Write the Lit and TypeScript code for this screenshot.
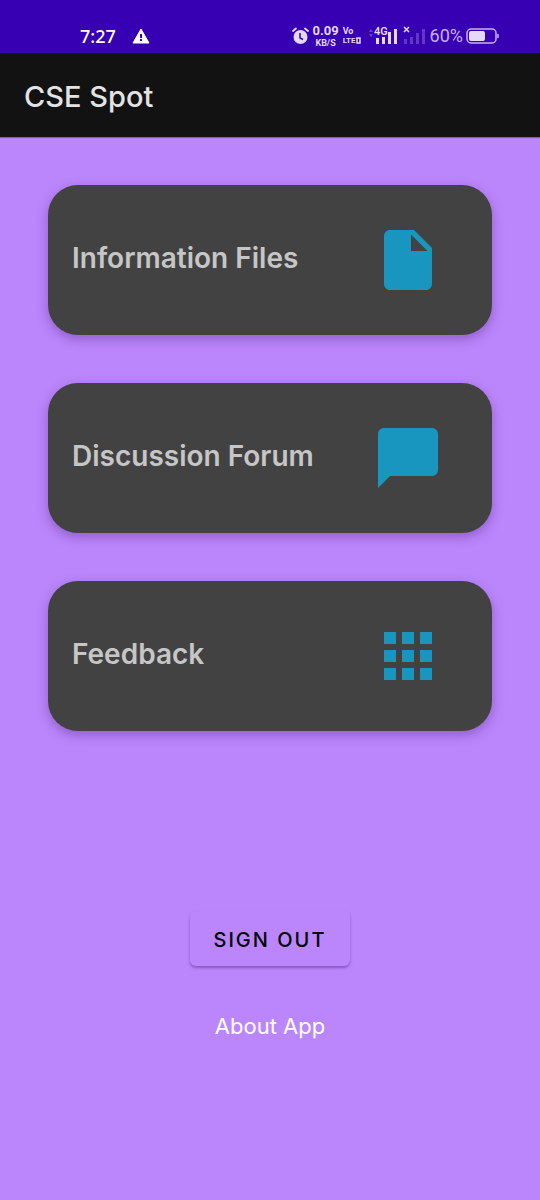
import { LitElement, html, css, svg } from "lit";
import { customElement } from "lit/decorators.js";

const cards = [
  {
    title: "Information Files",
    icon: svg`<path d="M6 2C4.900 2 4 2.900 4 4v16c0 1.100.9 2 2 2h12c1.100 0 2-.9 2-2V8l-6-6H6zm7 7V3.500L18.500 9H13z"/>`,
  },
  {
    title: "Discussion Forum",
    icon: svg`<path d="M20 2H4c-1.100 0-2 .9-2 2v18l4-4h14c1.100 0 2-.9 2-2V4c0-1.100-.9-2-2-2z"/>`,
  },
  {
    title: "Feedback",
    icon: svg`<path d="M4 8h4V4H4v4zm6 12h4v-4h-4v4zm-6 0h4v-4H4v4zm0-6h4v-4H4v4zm6 0h4v-4h-4v4zm6-10v4h4V4h-4zm-6 4h4V4h-4v4zm6 6h4v-4h-4v4zm0 6h4v-4h-4v4z"/>`,
  },
];

@customElement("app-root")
export class AppRoot extends LitElement {
  static styles = css`
    :host {
      display: flex;
      flex-direction: column;
      min-height: 100vh;
      background: #bb86fc;
      font-family: Inter, Roboto, sans-serif;
    }
    .status {
      display: flex;
      align-items: center;
      justify-content: space-between;
      box-sizing: border-box;
      height: 53px;
      padding: 18px 41px 0 80px;
      background: #3700b3;
      color: #e4d9f8;
    }
    .group {
      display: flex;
      align-items: center;
    }
    .left {
      gap: 16px;
      color: #fff;
    }
    .right {
      gap: 4px;
    }
    .time {
      font: 500 18px/24px "Noto Sans", sans-serif;
    }
    .stack {
      display: flex;
      flex-direction: column;
      align-items: center;
      font: 700 9px/10px Roboto, sans-serif;
    }
    .rate {
      font-size: 13px;
      line-height: 14px;
    }
    .volte {
      align-items: flex-start;
      padding-right: 3px;
    }
    .lte {
      display: flex;
      align-items: center;
      font-size: 8px;
    }
    .percent {
      font: 400 18px/24px Roboto, sans-serif;
      color: #c9b3ee;
    }
    .charge {
      display: flex;
      align-items: center;
      gap: 3px;
    }
    svg {
      display: block;
      flex: none;
    }
    .bar {
      display: flex;
      align-items: center;
      height: 84px;
      padding: 0 24px;
      background: #121212;
      box-shadow: 0 1px 1px rgba(0, 0, 0, 0.3);
    }
    .title {
      margin: 0;
      padding-top: 4px;
      font: 500 29px/40px Inter, sans-serif;
      color: #e3e3e3;
    }
    .content {
      display: flex;
      flex-direction: column;
      gap: 48px;
      padding: 48px;
    }
    .card {
      display: flex;
      align-items: center;
      justify-content: space-between;
      height: 150px;
      padding: 0 48px 0 24px;
      border: 0;
      border-radius: 30px;
      background: #424242;
      color: #c6c6c6;
      font: 600 28px/40px Inter, sans-serif;
      text-align: left;
      box-shadow: 0 4px 12px rgba(60, 20, 110, 0.35);
      cursor: pointer;
    }
    .label {
      padding-bottom: 4px;
    }
    .icon {
      fill: #1896bf;
    }
    .footer {
      display: flex;
      flex-direction: column;
      align-items: center;
      gap: 44px;
      padding: 132px 48px 48px;
    }
    .signout {
      height: 55px;
      padding: 2px 24px 0;
      border: 0;
      border-radius: 6px;
      background: #bb86fc;
      color: #000;
      font: 500 20px/28px Inter, sans-serif;
      letter-spacing: 2px;
      box-shadow: 0 2px 3px rgba(60, 20, 110, 0.4);
      cursor: pointer;
    }
    .about {
      color: #fff;
      font: 400 22px/32px Inter, sans-serif;
      text-decoration: none;
    }
  `;

  render() {
    return html`
      <header>
        <div class="status">
          <div class="group left">
            <span class="time">7:27</span>
            <svg width="18" height="16" viewBox="0 0 18 16">
              <path d="M9 1 17 15H1z" fill="#fff" stroke="#fff" stroke-linejoin="round" />
              <path d="M9 6v4M9 11v2" stroke="#3700b3" stroke-width="2" />
            </svg>
          </div>
          <div class="group right">
            <svg width="17" height="18" viewBox="0 0 17 18">
              <circle cx="8.500" cy="10" r="7" fill="currentColor" />
              <path d="M1 4 4 1.500M16 4 13 1.500" stroke="currentColor" stroke-width="1.800" stroke-linecap="round" />
              <path d="M8 6v5l3 1.500" fill="none" stroke="#3700b3" stroke-width="1.500" />
            </svg>
            <div class="stack"><span class="rate">0.09</span><span>KB/S</span></div>
            <div class="stack volte">
              <span>Vo</span>
              <span class="lte">LTE<svg width="5" height="7" viewBox="0 0 5 7"><path d="M1 1h3v5H1z" fill="none" stroke="currentColor" stroke-width="1.500" /></svg></span>
            </div>
            <svg width="31" height="20" viewBox="0 0 31 20">
              <path d="M1 6l2-3 2 3zM1 8l2 3 2-3z" fill="#6945c8" />
              <text x="6" y="9" font-size="11" font-weight="600" font-family="Roboto, sans-serif" fill="currentColor">4G</text>
              <path d="M8 12h3v6H8zM14 11h3v7h-3zM20 6h3v12h-3zM26 3h3v15h-3z" fill="currentColor" />
            </svg>
            <svg width="23" height="20" viewBox="0 0 23 20">
              <path d="M1 13h3v5H1zM7 11h3v7H7zM13 7h3v11h-3zM19 3h3v15h-3z" fill="#6038c4" />
              <path d="M1 1l5 5M6 1 1 6" stroke="currentColor" stroke-width="1.500" />
            </svg>
            <div class="charge">
              <span class="percent">60%</span>
              <svg width="33" height="16" viewBox="0 0 33 16">
                <rect x="1" y="1" width="29" height="14" rx="4" fill="none" stroke="#c9b3ee" stroke-width="1.500" />
                <rect x="3" y="3" width="16" height="10" rx="2" fill="currentColor" />
                <path d="M32 6v4" stroke="#c9b3ee" stroke-width="1.500" />
              </svg>
            </div>
          </div>
        </div>
        <div class="bar"><h1 class="title">CSE Spot</h1></div>
      </header>
      <main class="content">
        ${cards.map(
          (card) => html`
            <button class="card" type="button">
              <span class="label">${card.title}</span>
              <svg class="icon" width="72" height="72" viewBox="0 0 24 24" aria-hidden="true">${card.icon}</svg>
            </button>
          `,
        )}
      </main>
      <footer class="footer">
        <button class="signout" type="button">SIGN OUT</button>
        <a class="about" href="#about">About App</a>
      </footer>
    `;
  }
}
